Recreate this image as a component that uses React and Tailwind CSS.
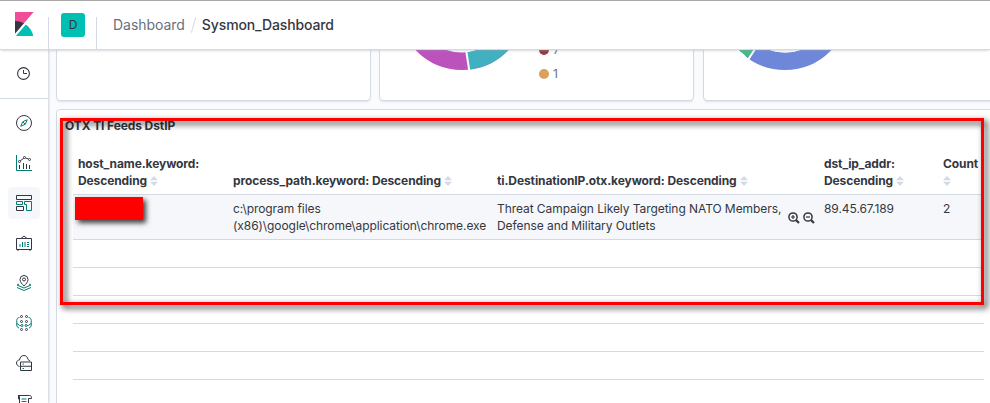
import React from "react";

const DARK = "#343741";
const TEAL = "#017d73";

function KibanaLogo() {
  return (
    <svg width="24" height="24" viewBox="0 0 32 32">
      <path fill="#F04E98" d="M4 0v28.789L28.935.017z" />
      <path fill="#343741" d="M4 12v16.789l11.906-13.738A24.721 24.721 0 004 12" />
      <path fill="#00BFB3" d="M18.479 16.664L6.268 30.754l-1.073 1.237h23.191c-1.252-6.292-4.883-11.719-9.907-15.327" />
    </svg>
  );
}

function Icon({ children, size = 16 }) {
  return (
    <svg width={size} height={size} viewBox="0 0 32 32" fill="none" stroke={DARK} strokeWidth="2">
      {children}
    </svg>
  );
}

const Discover = () => (
  <Icon>
    <circle cx="16" cy="16" r="15" />
    <path stroke={TEAL} d="M22.5 9.5 18.5 18.5 9.5 22.5 13.5 13.5z" />
    <path stroke={TEAL} d="M14 14l4 4" />
  </Icon>
);

const Visualize = () => (
  <Icon>
    <path stroke={TEAL} d="M1 0v31h31" />
    <path d="M7 28v-8M15 28V16M21 28V18M27 28v-8" />
    <circle cx="7" cy="13" r="2" />
    <circle cx="17" cy="5" r="2" />
    <circle cx="27" cy="9" r="2" />
    <path d="M8.5 11.5l7-5M19 6l6 2" />
  </Icon>
);

const DashboardIcon = () => (
  <Icon>
    <path d="M1 1h30v8H1z" />
    <path stroke={TEAL} d="M1 13h12v6H1zM17 13h14v18H21V19h-4z" />
    <path d="M1 23h14v8H1z" />
  </Icon>
);

const Canvas = () => (
  <Icon>
    <path d="M1 7h30v22H1zM10 7l6-5 6 5M4 29v3M28 29v3" />
    <path stroke={TEAL} d="M8 24v-6M13 24V14M18 24V14M22 15h4M22 19h4M22 23h4" />
  </Icon>
);

const Maps = () => (
  <Icon>
    <path d="M16 22c-4-4-8-8-8-13a8 8 0 0116 0c0 5-4 9-8 13z" />
    <circle cx="16" cy="9" r="3" />
    <path stroke={TEAL} d="M6 18l-4 2 14 6 14-6-4-2M2 25l14 6 14-6" />
  </Icon>
);

const MachineLearning = () => (
  <Icon>
    <circle cx="11" cy="3" r="2" />
    <circle cx="21" cy="3" r="2" />
    <circle cx="11" cy="13" r="2" />
    <circle cx="21" cy="13" r="2" />
    <circle cx="11" cy="29" r="2" />
    <circle cx="21" cy="29" r="2" />
    <path stroke={TEAL} d="M7 5C3 5 1.500 8 1.500 11v9c0 3 1.500 5 4.500 6M25 5c4 0 5.500 3 5.500 6v9c0 3-1.500 5-4.500 6M2 17l5 4h3M30 17l-5 4h-3" />
    <circle stroke={TEAL} cx="12" cy="21" r="2" />
    <circle stroke={TEAL} cx="20" cy="21" r="2" />
  </Icon>
);

const Metrics = () => (
  <Icon>
    <path d="M7 23C3 22 1 19 1 16c0-4 3-6 6-6 1-6 4-9 9-9 4 0 7 3 8 8l4 3" />
    <path d="M9 14h22v17H9zM9 22.500h22" />
    <path stroke={TEAL} d="M13 18h3M13 27h3" />
  </Icon>
);

const Logs = () => (
  <Icon>
    <path d="M7 24V4c0-2-1-3-3-3h23c3 0 4 2 4 6h-6M25 7v17M5 1v7h3" />
    <path stroke={TEAL} d="M11 8h10M11 13h10M11 18h10" />
  </Icon>
);

const navItems = [
  { id: "discover", Glyph: Discover },
  { id: "visualize", Glyph: Visualize },
  { id: "dashboard", Glyph: DashboardIcon, active: true },
  { id: "canvas", Glyph: Canvas },
  { id: "maps", Glyph: Maps },
  { id: "ml", Glyph: MachineLearning },
  { id: "metrics", Glyph: Metrics },
  { id: "logs", Glyph: Logs },
];

function Sort() {
  return (
    <svg className="ml-[3px] inline-block align-[-1px]" width="8" height="10" viewBox="0 0 8 10" fill="#d3dae6">
      <path d="M4 0l4 4.200H0zM4 10l4-4.200H0z" />
    </svg>
  );
}

function Magnifier({ plus }) {
  return (
    <svg width="12" height="12" viewBox="0 0 12 12" fill="none" stroke={DARK}>
      <circle cx="5" cy="5" r="4.100" strokeWidth="1.500" />
      <path strokeWidth="2.200" d="M8 8l3 3" />
      <path strokeWidth="1.200" d={plus ? "M3 5h4M5 3v4" : "M3 5h4"} />
    </svg>
  );
}

const columns = "grid grid-cols-[155px_264px_327px_119px_46px]";

const panel = "rounded border border-[#d3dae6] bg-white shadow-[0_2px_2px_-1px_rgba(152,162,179,0.3)]";

export default function App() {
  return (
    <div
      className="relative flex h-[403px] w-[990px] flex-col overflow-hidden bg-white text-[#343741]"
      style={{ fontFamily: 'Inter, "Liberation Sans", sans-serif' }}
    >
      <header className="z-10 flex h-[50px] shrink-0 border-t border-b border-t-[#aaaaaa] border-b-[#d3dae6] bg-white shadow-[0_2px_2px_-1px_rgba(152,162,179,0.4)]">
        <div className="flex w-12 justify-center pt-[11px]">
          <KibanaLogo />
        </div>
        <div className="mt-4 flex w-[49px] border-x border-[#d3dae6]">
          <div className="-mt-1 ml-3 flex size-6 items-center justify-center rounded-[3px] bg-[#00bfb3] pb-px text-[12px]">D</div>
        </div>
        <nav className="flex h-[47px] items-center pl-4 text-[14px]">
          <span className="tracking-[-0.04px] text-[#69707d]">Dashboard</span>
          <span className="mr-[8px] ml-[8px] h-4 w-px rotate-[15deg] bg-[#d3dae6]" />
          <span className="font-medium tracking-[-0.12px]">Sysmon_Dashboard</span>
        </nav>
      </header>

      <div className="flex min-h-0 flex-1">
        <aside className="z-[5] flex w-12 shrink-0 flex-col bg-white shadow-[1px_0_2px_rgba(152,162,179,0.45)]">
          <div className="flex h-[49px] shrink-0 items-center justify-center border-b border-[#d3dae6]">
            <svg width="13" height="13" viewBox="0 0 13 13" fill="none" stroke={DARK} className="mr-px -mt-px">
              <circle cx="6.500" cy="6.500" r="5.900" strokeWidth="1.100" />
              <path d="M6.500 3v3.500H10" />
            </svg>
          </div>
          <div className="flex flex-col items-center gap-2 pt-2">
            {navItems.map(({ id, Glyph, active }) => (
              <div
                key={id}
                className={active ? "flex size-8 items-center justify-center rounded bg-[#f5f7fa]" : "flex size-8 items-center justify-center"}
              >
                <Glyph />
              </div>
            ))}
          </div>
        </aside>

        <main className="flex w-[960px] shrink-0 flex-col gap-2 bg-[#fafbfd] pl-2">
          <section className="-mt-2 flex h-[59px] shrink-0">
            <div className={`mr-2 w-[315px] shrink-0 ${panel}`} />
            <div className={`mr-[9px] flex w-[315px] shrink-0 ${panel}`}>
              <svg width="150" height="50" viewBox="380 42 150 50">
                <circle cx="462" cy="5" r="55.250" fill="none" stroke="#bc52bc" strokeWidth="17.500" />
                <path fill="none" stroke="#41b0c0" strokeWidth="17.500" d="M468.500 59.900A55.250 55.250 0 00517.250 5" />
                <path stroke="#fff" strokeWidth="2" d="M465.500 45L469.300 70" />
              </svg>
              <ul className="ml-[9px] flex flex-col text-[12px] leading-[23px] text-[#69707d]">
                <li className="-mt-[5px] flex items-center gap-[4px]">
                  <span className="size-[10px] rounded-full bg-[#963b3b]" />7
                </li>
                <li className="flex items-center gap-[4px]">
                  <span className="mt-px size-[10px] rounded-full bg-[#daa05d]" />
                  <span className="mt-px">1</span>
                </li>
              </ul>
            </div>
            <div className={`w-[316px] shrink-0 ${panel}`}>
              <svg width="150" height="50" viewBox="704 42 150 50">
                <circle cx="785" cy="5" r="55.250" fill="none" stroke="#6f87d8" strokeWidth="17.500" />
                <path fill="#fff" d="M720 42h15.500L748 58.500L740 62H720z" />
                <path fill="#49b987" d="M733 42L740 50.300L748.300 56.800L758 42z" />
                <path stroke="#fff" strokeWidth="2" d="M759 42L748.500 58" />
                <circle cx="785" cy="5" r="46.500" fill="#fff" />
              </svg>
            </div>
          </section>

          <section className="h-[320px] w-[948px] shrink-0 rounded border border-[#d3dae6] bg-white pt-[7px] pl-2">
            <h2 className="text-[12px] leading-[17px] font-bold tracking-[-0.1px]">OTX TI Feeds DstIP</h2>
            <div className="mt-[18px] ml-2 w-[911px] text-[12px] leading-[17px]">
              <div className={`${columns} h-[43px] items-end border-b border-[#d3dae6] pb-[5px] pl-[5px] font-bold tracking-[-0.1px]`}>
                <div>host_name.keyword:<br />Descending<Sort /></div>
                <div>process_path.keyword: Descending<Sort /></div>
                <div>ti.DestinationIP.otx.keyword: Descending<Sort /></div>
                <div>dst_ip_addr:<br />Descending<Sort /></div>
                <div>Count<br /><span className="-ml-[3px]"><Sort /></span></div>
              </div>
              <div className={`${columns} h-[45px] border-b border-[#d3dae6] bg-[#f5f7fa] pt-[5px] pl-[5px] tracking-[-0.07px]`}>
                <div className="-mt-[3px] -ml-[3px] h-[23px] w-[68px] bg-[#ff0000] shadow-[3px_3px_5px_rgba(0,0,0,0.75)]" />
                <div>c:\program files<br />(x86)\google\chrome\application\chrome.exe</div>
                <div className="flex justify-between">
                  <span>Threat Campaign Likely Targeting NATO Members,<br />Defense and Military Outlets</span>
                  <span className="mt-[12px] mr-[9px] flex gap-[3px]">
                    <Magnifier plus />
                    <Magnifier />
                  </span>
                </div>
                <div>89.45.67.189</div>
                <div>2</div>
              </div>
              {[1, 2, 3, 4, 5].map((n) => (
                <div key={n} className="h-7 border-b border-[#d3dae6]" />
              ))}
            </div>
          </section>
        </main>
      </div>

      <div className="absolute top-[118px] left-[60px] z-20 h-[187px] w-[924px] border-[3px] border-[#ff0000] drop-shadow-[3px_3px_3px_rgba(0,0,0,0.85)]" />
    </div>
  );
}
